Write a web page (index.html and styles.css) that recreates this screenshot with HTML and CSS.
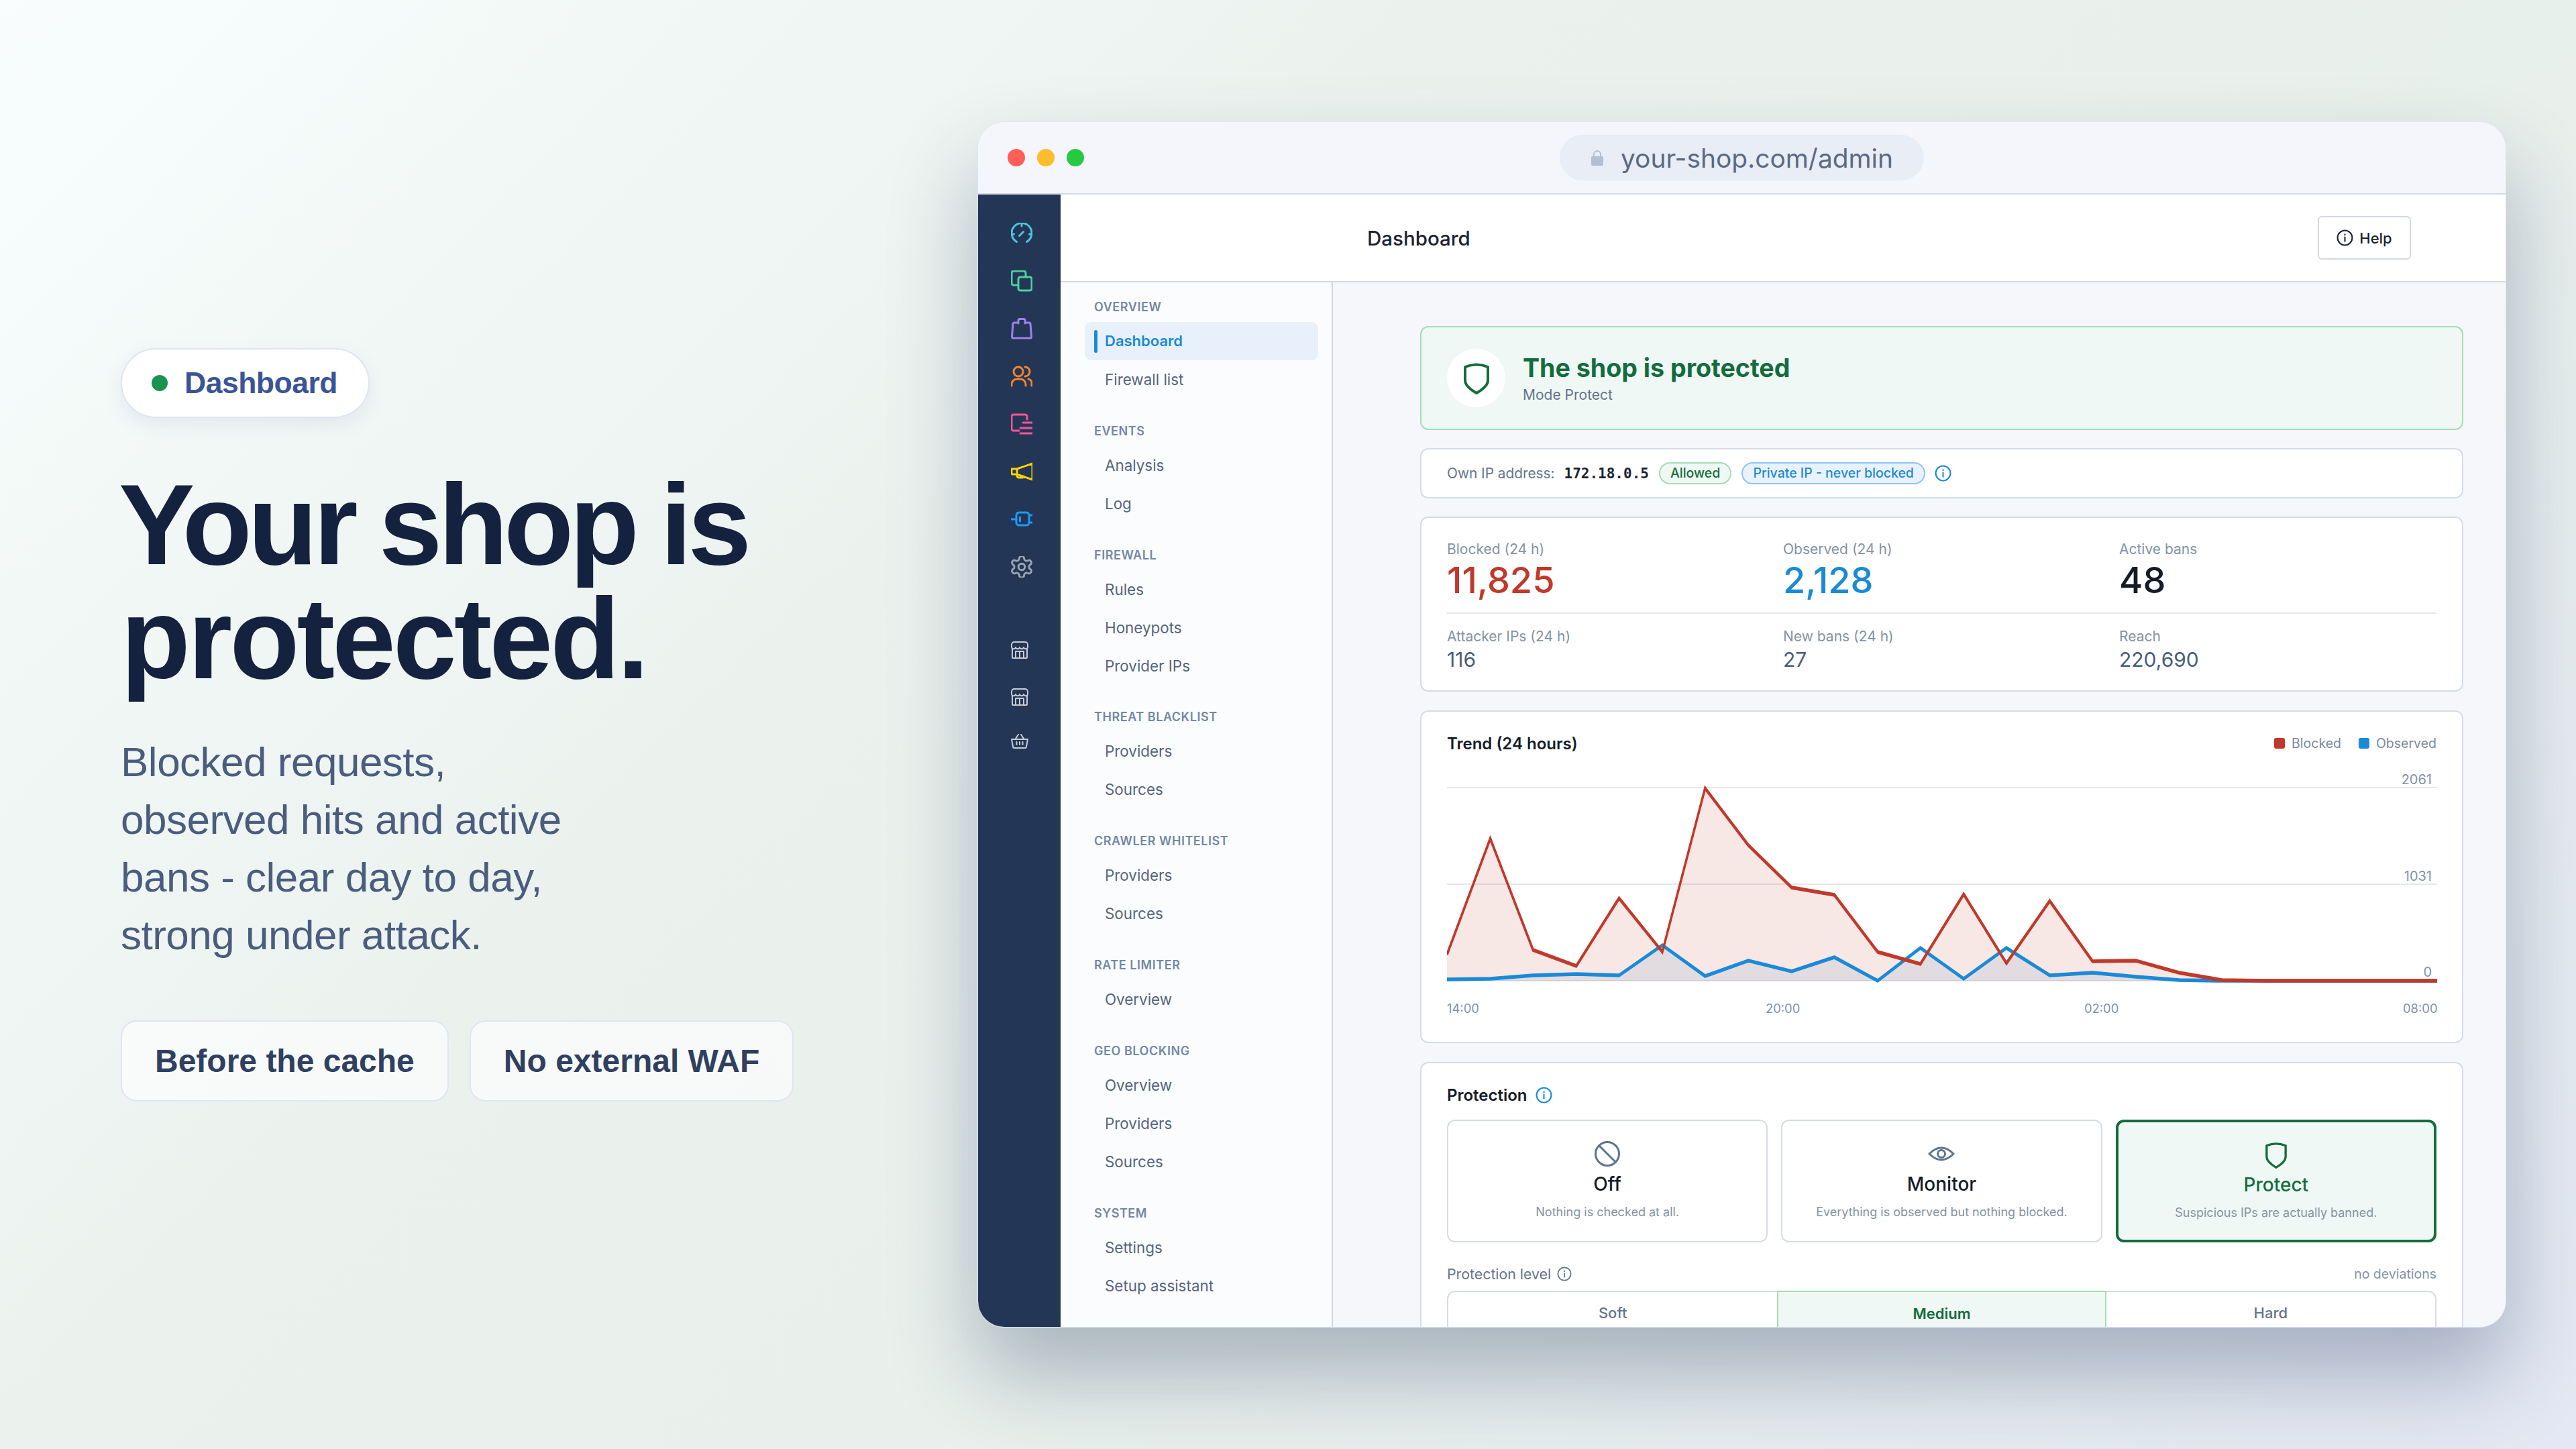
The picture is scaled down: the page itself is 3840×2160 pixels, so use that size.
FILE: index.html
```html
<!DOCTYPE html>
<html lang="en">
<head>
    <meta charset="UTF-8">
    <title>Dashboard</title>
    <link rel="stylesheet" href="styles.css">
</head>
<body>
    <section class="intro">
        <div class="pill"><span class="pill-dot"></span>Dashboard</div>
        <h1><span class="hero-top">Your shop is</span><span class="hero-bottom">protected.</span></h1>
        <p class="lead">Blocked requests,<br>observed hits and active<br>bans - clear day to day,<br>strong under attack.</p>
        <div class="chips">
            <div class="chip">Before the cache</div>
            <div class="chip">No external WAF</div>
        </div>
    </section>

    <div class="window">
        <div class="titlebar">
            <div class="lights"><span class="red"></span><span class="amber"></span><span class="green"></span></div>
            <div class="url">
                <svg class="lock" viewBox="0 0 20 24"><path d="M5 11V7a5 5 0 0 1 10 0v4" fill="none" stroke="#b4bed3" stroke-width="2"/><rect x="1" y="10" width="18" height="14" rx="2" fill="#b4bed3"/></svg>
                your-shop.com/admin
            </div>
        </div>
        <div class="app">
            <nav class="rail">
                <div class="rail-main">
                    <svg viewBox="0 0 32 32" style="color:#4fc3dc"><path d="M8.500 28.500A15 15 0 1 1 23.500 28.500M16 2v3M1.500 17h3M27.500 17h3M12.500 19.500l6-6"/></svg>
                    <svg viewBox="0 0 32 32" style="color:#4fd19a"><path d="M10 22H4a3 3 0 0 1-3-3V4a3 3 0 0 1 3-3h15a3 3 0 0 1 3 3v6"/><rect x="11" y="10" width="20" height="20" rx="3"/></svg>
                    <svg viewBox="0 0 32 32" style="color:#9b82f0"><path d="M10 7H5a2 2 0 0 0-2 2L1.500 28a2 2 0 0 0 2 2h25a2 2 0 0 0 2-2L29 9a2 2 0 0 0-2-2h-5"/><path d="M11 8V3.500a2 2 0 0 1 2-2h6a2 2 0 0 1 2 2V8"/></svg>
                    <svg viewBox="0 0 32 32" style="color:#f5832c"><circle cx="11" cy="9" r="7"/><path d="M1 30v-2a8 8 0 0 1 8-8h5a8 8 0 0 1 8 8v2M21 2a7 7 0 0 1 0 14M26 20a6 6 0 0 1 5 6v4"/></svg>
                    <svg viewBox="0 0 32 32" style="color:#f6549a"><path d="M24 9V5a3 3 0 0 0-3-3H4a3 3 0 0 0-3 3v18a3 3 0 0 0 3 3h8M18 14h14M14 22h18M14 30h18"/></svg>
                    <svg viewBox="0 0 32 32" style="color:#ffd400"><path d="M1 12h8v8H3a2 2 0 0 1-2-2zM9 12l23-8v24l-23-8M9 20v2a3 3 0 0 0 3 3h4a3 3 0 0 0 3-2"/></svg>
                    <svg viewBox="0 0 32 32" style="color:#1a9cf5"><rect x="8" y="6" width="19" height="19" rx="4"/><path d="M0 16h8M27 10h5M27 21h5M13.500 13v6"/></svg>
                    <svg viewBox="2 2 20 20" class="gear" style="color:#9aa5b5"><path d="M12.220 2h-.44a2 2 0 0 0-2 2v.18a2 2 0 0 1-1 1.730l-.43.25a2 2 0 0 1-2 0l-.15-.08a2 2 0 0 0-2.730.73l-.22.38a2 2 0 0 0 .73 2.730l.15.1a2 2 0 0 1 1 1.720v.51a2 2 0 0 1-1 1.740l-.15.09a2 2 0 0 0-.73 2.730l.22.38a2 2 0 0 0 2.730.73l.15-.08a2 2 0 0 1 2 0l.43.25a2 2 0 0 1 1 1.730V20a2 2 0 0 0 2 2h.44a2 2 0 0 0 2-2v-.18a2 2 0 0 1 1-1.730l.43-.25a2 2 0 0 1 2 0l.15.08a2 2 0 0 0 2.730-.73l.22-.39a2 2 0 0 0-.73-2.730l-.15-.08a2 2 0 0 1-1-1.740v-.5a2 2 0 0 1 1-1.740l.15-.09a2 2 0 0 0 .73-2.730l-.22-.38a2 2 0 0 0-2.730-.73l-.15.08a2 2 0 0 1-2 0l-.43-.25a2 2 0 0 1-1-1.730V4a2 2 0 0 0-2-2z"/><circle cx="12" cy="12" r="3"/></svg>
                </div>
                <div class="rail-shops">
                    <svg viewBox="0 0 26 26"><path d="M1 9V5a4 4 0 0 1 4-4h16a4 4 0 0 1 4 4v4M1 9c1 3 5 3 6 0 1 3 5 3 6 0 1 3 5 3 6 0 1 3 5 3 6 0M2 11v13a1 1 0 0 0 1 1h20a1 1 0 0 0 1-1V11M7 25V15h12v10M13 15v10"/></svg>
                    <svg viewBox="0 0 26 26"><path d="M1 9V5a4 4 0 0 1 4-4h16a4 4 0 0 1 4 4v4M1 9c1 3 5 3 6 0 1 3 5 3 6 0 1 3 5 3 6 0 1 3 5 3 6 0M2 11v13a1 1 0 0 0 1 1h20a1 1 0 0 0 1-1V11M7 25V15h12v10M13 15v10"/></svg>
                    <svg class="basket" viewBox="0 0 26 22"><path d="M1 8h24l-2 11a2 2 0 0 1-2 2H5a2 2 0 0 1-2-2zM7 7l4-6M19 7l-4-6M8.500 12v4M13 12v4M17.500 12v4"/></svg>
                </div>
            </nav>
            <div class="workspace">
                <header class="topbar">
                    <div class="topbar-title">Dashboard</div>
                    <div class="help-btn">
                        <svg class="info" viewBox="0 0 24 24"><circle cx="12" cy="12" r="10.500"/><path d="M12 11v6M12 7v1"/></svg>
                        Help
                    </div>
                </header>
                <div class="panes">
                    <aside class="subnav">
                        <div class="nav-group">
                            <div class="nav-title">OVERVIEW</div>
                            <div class="nav-item active">Dashboard</div>
                            <div class="nav-item">Firewall list</div>
                        </div>
                        <div class="nav-group">
                            <div class="nav-title">EVENTS</div>
                            <div class="nav-item">Analysis</div>
                            <div class="nav-item">Log</div>
                        </div>
                        <div class="nav-group">
                            <div class="nav-title">FIREWALL</div>
                            <div class="nav-item">Rules</div>
                            <div class="nav-item">Honeypots</div>
                            <div class="nav-item">Provider IPs</div>
                        </div>
                        <div class="nav-group">
                            <div class="nav-title">THREAT BLACKLIST</div>
                            <div class="nav-item">Providers</div>
                            <div class="nav-item">Sources</div>
                        </div>
                        <div class="nav-group">
                            <div class="nav-title">CRAWLER WHITELIST</div>
                            <div class="nav-item">Providers</div>
                            <div class="nav-item">Sources</div>
                        </div>
                        <div class="nav-group">
                            <div class="nav-title">RATE LIMITER</div>
                            <div class="nav-item">Overview</div>
                        </div>
                        <div class="nav-group">
                            <div class="nav-title">GEO BLOCKING</div>
                            <div class="nav-item">Overview</div>
                            <div class="nav-item">Providers</div>
                            <div class="nav-item">Sources</div>
                        </div>
                        <div class="nav-group">
                            <div class="nav-title">SYSTEM</div>
                            <div class="nav-item">Settings</div>
                            <div class="nav-item">Setup assistant</div>
                        </div>
                    </aside>
                    <main class="content">
                        <div class="banner">
                            <div class="banner-icon">
                                <svg class="shield" viewBox="0 0 40 48"><path d="M3 7Q20 0 37 7V27Q37 36 20 46 3 36 3 27Z"/></svg>
                            </div>
                            <div>
                                <div class="banner-title">The shop is protected</div>
                                <div class="banner-sub">Mode Protect</div>
                            </div>
                        </div>

                        <div class="card ip-row">
                            <span class="ip-label">Own IP address:</span>
                            <span class="ip-value">172.18.0.5</span>
                            <span class="badge badge-green">Allowed</span>
                            <span class="badge badge-blue">Private IP - never blocked</span>
                            <svg class="info info-blue" viewBox="0 0 24 24"><circle cx="12" cy="12" r="10.500"/><path d="M12 11v6M12 7v1"/></svg>
                        </div>

                        <div class="card stats">
                            <div class="stats-row">
                                <div><div class="stat-label">Blocked (24 h)</div><div class="stat-big red-text">11,825</div></div>
                                <div><div class="stat-label">Observed (24 h)</div><div class="stat-big blue-text">2,128</div></div>
                                <div><div class="stat-label">Active bans</div><div class="stat-big">48</div></div>
                            </div>
                            <div class="stats-row second">
                                <div><div class="stat-label">Attacker IPs (24 h)</div><div class="stat-small">116</div></div>
                                <div><div class="stat-label">New bans (24 h)</div><div class="stat-small">27</div></div>
                                <div><div class="stat-label">Reach</div><div class="stat-small">220,690</div></div>
                            </div>
                        </div>

                        <div class="card trend">
                            <div class="trend-head">
                                <div class="card-title">Trend (24 hours)</div>
                                <div class="legend">
                                    <span class="legend-item"><i class="sw-red"></i>Blocked</span>
                                    <span class="legend-item"><i class="sw-blue"></i>Observed</span>
                                </div>
                            </div>
                            <div class="chart">
                                <svg class="chart-grid" viewBox="0 0 1476 340">
                                    <line class="grid" x1="0" y1="34" x2="1476" y2="34"/>
                                    <line class="grid" x1="0" y1="178" x2="1476" y2="178"/>
                                    <line class="grid" x1="0" y1="322" x2="1476" y2="322"/>
                                    <text class="axis" x="1468" y="29" text-anchor="end">2061</text>
                                    <text class="axis" x="1468" y="173" text-anchor="end">1031</text>
                                    <text class="axis" x="1468" y="316" text-anchor="end">0</text>
                                </svg>
                                <svg class="chart-lines" viewBox="0 0 1968 272" preserveAspectRatio="none">
                                    <polygon class="area-blue" points="0,257.6 0,256 86,255.2 171,251.2 257,249.6 342,251.2 428,215.2 513,252 599,233.6 685,246.4 770,229.6 856,257.6 941,218.4 1027,255.2 1112,218.4 1198,251.2 1283,248 1369,252.8 1455,256.8 1540,257.6 1968,257.6"/>
                                    <polygon class="area-red" points="0,257.6 0,226.4 86,88 171,220.8 257,240 342,159.2 428,223.2 513,28 599,96 685,146.4 770,155.2 856,223.2 941,237.6 1027,154.4 1112,236.8 1198,162.4 1283,234.4 1369,233.6 1455,248 1540,256.8 1626,257.6 1968,257.6"/>
                                    <polyline class="line-blue" points="0,256 86,255.2 171,251.2 257,249.6 342,251.2 428,215.2 513,252 599,233.6 685,246.4 770,229.6 856,257.6 941,218.4 1027,255.2 1112,218.4 1198,251.2 1283,248 1369,252.8 1455,256.8 1540,257.6 1968,257.6"/>
                                    <polyline class="line-red" points="0,226.4 86,88 171,220.8 257,240 342,159.2 428,223.2 513,28 599,96 685,146.4 770,155.2 856,223.2 941,237.6 1027,154.4 1112,236.8 1198,162.4 1283,234.4 1369,233.6 1455,248 1540,256.8 1626,257.6 1968,257.6"/>
                                </svg>
                            </div>
                            <div class="x-axis"><span>14:00</span><span>20:00</span><span>02:00</span><span>08:00</span></div>
                        </div>

                        <div class="card protection">
                            <div class="card-title with-icon">Protection
                                <svg class="info info-blue" viewBox="0 0 24 24"><circle cx="12" cy="12" r="10.500"/><path d="M12 11v6M12 7v1"/></svg>
                            </div>
                            <div class="modes">
                                <div class="mode">
                                    <svg class="mode-icon" viewBox="0 0 40 40"><circle cx="20" cy="20" r="17.500"/><path d="M8 8l24 24"/></svg>
                                    <div class="mode-name">Off</div>
                                    <div class="mode-desc">Nothing is checked at all.</div>
                                </div>
                                <div class="mode">
                                    <svg class="mode-icon" viewBox="0 0 40 40"><path d="M2 20Q20 2 38 20 20 38 2 20Z"/><circle cx="20" cy="20" r="5.500"/></svg>
                                    <div class="mode-name">Monitor</div>
                                    <div class="mode-desc">Everything is observed but nothing blocked.</div>
                                </div>
                                <div class="mode selected">
                                    <svg class="shield" viewBox="0 0 40 48"><path d="M3 7Q20 0 37 7V27Q37 36 20 46 3 36 3 27Z"/></svg>
                                    <div class="mode-name">Protect</div>
                                    <div class="mode-desc">Suspicious IPs are actually banned.</div>
                                </div>
                            </div>
                            <div class="level-head">
                                <div class="level-label">Protection level
                                    <svg class="info info-grey" viewBox="0 0 24 24"><circle cx="12" cy="12" r="10.500"/><path d="M12 11v6M12 7v1"/></svg>
                                </div>
                                <div class="level-note">no deviations</div>
                            </div>
                            <div class="levels">
                                <div class="level">Soft</div>
                                <div class="level on">Medium</div>
                                <div class="level">Hard</div>
                            </div>
                        </div>
                    </main>
                </div>
            </div>
        </div>
    </div>
</body>
</html>
```

FILE: styles.css
```css
* {
    box-sizing: border-box;
}

body {
    margin: 0;
    width: 3840px;
    height: 2160px;
    padding: 0 104px 0 180px;
    display: flex;
    justify-content: space-between;
    align-items: center;
    overflow: hidden;
    font-family: "Liberation Sans", Arial, sans-serif;
    background: linear-gradient(135deg, #f9fdfe 0%, #ebf2ee 36%, #e8f0eb 64%, #e3e8f4 100%);
}

/* left column */
.intro {
    width: 1100px;
}

.pill {
    display: inline-flex;
    align-items: center;
    gap: 25px;
    height: 104px;
    padding: 0 46px 0 44px;
    background: #fff;
    border: 2px solid #dfe5f3;
    border-radius: 52px;
    box-shadow: 0 10px 30px rgba(30, 50, 90, 0.08);
    color: #3a5498;
    font-size: 44.500px;
    font-weight: 700;
    letter-spacing: -0.5px;
}

.pill-dot {
    width: 24px;
    height: 24px;
    border-radius: 50%;
    background: #1a934e;
}

h1 {
    margin: 74px 0 0;
    font-size: 170px;
    line-height: 170px;
    font-weight: 700;
    color: #14223f;
}

.hero-top,
.hero-bottom {
    display: block;
}

.hero-top {
    margin-left: -3px;
    letter-spacing: -6px;
    word-spacing: -4px;
}

.hero-bottom {
    letter-spacing: -3.8px;
}

.lead {
    margin: 56px 0 0;
    font-size: 62px;
    line-height: 86px;
    letter-spacing: -0.5px;
    color: #4a5d7e;
}

.chips {
    display: flex;
    gap: 31px;
    margin-top: 84px;
}

.chip {
    height: 121px;
    padding: 0 49px;
    display: flex;
    align-items: center;
    background: rgba(255, 255, 255, 0.6);
    border: 2px solid #dfe5f3;
    border-radius: 24px;
    color: #2f4060;
    font-size: 48px;
    font-weight: 700;
}

/* browser window */
.window {
    flex-shrink: 0;
    width: 2279px;
    height: 1798px;
    display: flex;
    flex-direction: column;
    overflow: hidden;
    background: #f4f6fb;
    border: 1px solid #dfe5f3;
    border-radius: 40px;
    box-shadow: 0 70px 130px rgba(30, 50, 90, 0.32);
    font-family: Inter, "Liberation Sans", sans-serif;
}

.titlebar {
    flex-shrink: 0;
    height: 108px;
    position: relative;
    display: flex;
    align-items: center;
    justify-content: center;
    background: #f4f6fb;
    border-bottom: 2px solid #d5dae5;
}

.lights {
    position: absolute;
    left: 44px;
    top: 40px;
    display: flex;
    gap: 18px;
}

.lights span {
    width: 26px;
    height: 26px;
    border-radius: 50%;
}

.red { background: #ff5f57; }
.amber { background: #febc2e; }
.green { background: #28c840; }

.url {
    width: 543px;
    height: 68px;
    display: flex;
    align-items: center;
    justify-content: center;
    gap: 25px;
    background: #e9edf5;
    border-radius: 34px;
    color: #5a6a85;
    font-size: 38.900px;
}

.lock {
    width: 20px;
    height: 24px;
}

.app {
    flex: 1;
    min-height: 0;
    display: flex;
}

/* dark icon rail */
.rail {
    flex-shrink: 0;
    width: 123px;
    padding: 42px 0 0 49px;
    background: #243656;
}

.rail svg {
    display: block;
    fill: none;
    stroke-width: 3;
    stroke-linecap: round;
    stroke-linejoin: round;
    stroke: currentColor;
}

.rail-main {
    display: flex;
    flex-direction: column;
    gap: 39px;
}

.rail-main svg {
    width: 32px;
    height: 32px;
}

.rail-main .gear {
    stroke-width: 1.800;
}

.rail-shops {
    margin-top: 95px;
    display: flex;
    flex-direction: column;
    gap: 44px;
    color: #c8ccd6;
}

.rail-shops svg {
    width: 26px;
    height: 26px;
    stroke-width: 2;
}

.rail-shops .basket {
    height: 22px;
    margin-top: -2px;
}

.workspace {
    flex: 1;
    min-width: 0;
    display: flex;
    flex-direction: column;
}

.topbar {
    flex-shrink: 0;
    height: 131px;
    padding: 0 141px 0 457px;
    display: flex;
    align-items: center;
    justify-content: space-between;
    background: #fff;
    border-bottom: 2px solid #d5dae2;
}

.topbar-title {
    font-size: 29.500px;
    font-weight: 500;
    color: #1c2330;
}

.help-btn {
    width: 139px;
    height: 65px;
    display: flex;
    align-items: center;
    justify-content: center;
    gap: 9px;
    border: 2px solid #d5d9e0;
    border-radius: 6px;
    color: #1c2330;
    font-size: 22px;
    font-weight: 500;
}

.info {
    width: 25px;
    height: 25px;
    fill: none;
    stroke: currentColor;
    stroke-width: 2;
    stroke-linecap: round;
    flex-shrink: 0;
}

.info-blue { color: #1b8ad6; }
.info-grey { color: #64748b; width: 22px; height: 22px; }

.panes {
    flex: 1;
    min-height: 0;
    display: flex;
}

/* section nav */
.subnav {
    flex-shrink: 0;
    width: 406px;
    padding: 25px 20px 0 36px;
    background: #fbfcfe;
    border-right: 2px solid #cfd6e0;
}

.nav-group {
    margin-bottom: 36.800px;
}

.nav-title {
    height: 24px;
    line-height: 24px;
    margin-bottom: 10px;
    padding-left: 14px;
    color: #7288a5;
    font-size: 18px;
    font-weight: 600;
    letter-spacing: 0.550px;
}

.nav-item {
    position: relative;
    height: 57px;
    line-height: 57px;
    padding-left: 30px;
    border-radius: 10px;
    color: #55657d;
    font-size: 22.400px;
}

.nav-item.active {
    background: #e8f0fb;
    color: #1b8ad6;
    font-size: 22px;
    font-weight: 600;
}

.nav-item.active::before {
    content: "";
    position: absolute;
    left: 14px;
    top: 12px;
    width: 5px;
    height: 34px;
    border-radius: 3px;
    background: #1b8ad6;
}

/* main column */
.content {
    flex: 1;
    min-width: 0;
    height: 100%;
    padding: 65px 63px 0 130px;
    display: flex;
    flex-direction: column;
    gap: 27px;
    overflow: hidden;
    background: #f5f7fb;
}

.card {
    flex-shrink: 0;
    padding: 0 38px;
    background: #fff;
    border: 2px solid #d5dce5;
    border-radius: 12px;
}

.banner {
    flex-shrink: 0;
    height: 155px;
    padding: 0 38px;
    display: flex;
    align-items: center;
    gap: 26px;
    background: #eff8f4;
    border: 2px solid #a5dcb6;
    border-radius: 12px;
}

.banner-icon {
    width: 87px;
    height: 87px;
    display: flex;
    align-items: center;
    justify-content: center;
    border-radius: 50%;
    background: #fff;
}

.shield {
    display: block;
    width: 40px;
    height: 48px;
    fill: none;
    stroke: #146c3e;
    stroke-width: 4;
    stroke-linejoin: round;
}

.banner-title {
    color: #146c3e;
    font-size: 37.600px;
    font-weight: 700;
    line-height: 48px;
}

.banner-sub {
    margin-top: 2px;
    color: #64748b;
    font-size: 21px;
    line-height: 28px;
}

.ip-row {
    height: 75px;
    display: flex;
    align-items: center;
    color: #64748b;
    font-size: 20.800px;
}

.ip-value {
    margin: 0 15px 0 14px;
    color: #1c2330;
    font-family: "DejaVu Sans Mono", monospace;
    font-size: 21px;
    font-weight: 700;
}

.badge {
    height: 33px;
    line-height: 29px;
    padding: 0 15px;
    border-radius: 17px;
    font-size: 19.500px;
    font-weight: 500;
}

.badge-green {
    margin-right: 15px;
    background: #eff8f4;
    border: 2px solid #a5dcb6;
    color: #146c3e;
}

.badge-blue {
    margin-right: 14px;
    background: #e8f2fc;
    border: 2px solid #8fc4f0;
    color: #1b8ad6;
}

.stats {
    height: 261px;
    padding-top: 34px;
}

.stats-row {
    display: grid;
    grid-template-columns: 501px 501px 1fr;
    height: 107px;
}

.stats-row.second {
    border-top: 2px solid #e4e8ed;
    padding-top: 21px;
}

.stat-label {
    color: #8492a8;
    font-size: 21px;
    line-height: 26px;
}

.stat-big {
    color: #151c27;
    font-size: 54px;
    font-weight: 500;
    line-height: 66px;
}

.red-text { color: #c0392b; }
.blue-text { color: #1b8ad6; }

.stat-small {
    margin-top: 2px;
    color: #4a5d78;
    font-size: 30px;
    line-height: 38px;
}

.trend {
    height: 496px;
    margin-top: 1px;
    padding-top: 30px;
}

.trend-head {
    display: flex;
    justify-content: space-between;
    align-items: center;
    height: 34px;
}

.card-title {
    color: #151c27;
    font-size: 24px;
    font-weight: 600;
}

.legend {
    display: flex;
    gap: 26px;
    color: #7a8aa0;
    font-size: 19.500px;
}

.legend-item {
    display: flex;
    align-items: center;
    gap: 10px;
}

.legend-item i {
    width: 16px;
    height: 16px;
    border-radius: 3px;
}

.sw-red { background: #c0392b; }
.sw-blue { background: #1b8ad6; }

.chart {
    position: relative;
    width: 1476px;
    height: 340px;
    margin-top: 15px;
}

.chart-grid {
    display: block;
    width: 100%;
    height: 100%;
}

.chart-lines {
    position: absolute;
    left: 0;
    top: 0;
    width: 100%;
    height: 100%;
}

.grid {
    stroke: #e4e8ed;
    stroke-width: 2;
}

.axis {
    fill: #8092ab;
    font-size: 20px;
}

.area-red { fill: rgba(192, 57, 43, 0.12); }
.area-blue { fill: rgba(27, 138, 214, 0.1); }

.line-red,
.line-blue {
    fill: none;
    stroke-width: 4.500;
    stroke-linejoin: miter;
    stroke-miterlimit: 10;
}

.line-red { stroke: #c0392b; }
.line-blue { stroke: #1b8ad6; }

.x-axis {
    display: flex;
    justify-content: space-between;
    margin-top: 12px;
    color: #8092ab;
    font-size: 18.400px;
}

.x-axis span {
    width: 50px;
}

.x-axis span:last-child {
    text-align: right;
}

.protection {
    margin-top: 1px;
    padding-top: 32px;
    flex: 1 0 auto;
    border-bottom: none;
}

.with-icon {
    display: flex;
    align-items: center;
    gap: 12px;
    height: 30px;
}

.modes {
    display: grid;
    grid-template-columns: repeat(3, 1fr);
    gap: 20px;
    margin-top: 22px;
}

.mode {
    height: 183px;
    display: flex;
    flex-direction: column;
    align-items: center;
    padding-top: 29px;
    border: 2px solid #d5dce5;
    border-radius: 12px;
}

.mode.selected {
    padding-top: 29px;
    background: #eff8f4;
    border: 4px solid #146c3e;
}

.mode-icon {
    display: block;
    width: 40px;
    height: 40px;
    fill: none;
    stroke: #5f7490;
    stroke-width: 3;
}

.mode .shield {
    width: 34px;
    height: 40px;
}

.mode-name {
    margin-top: 8px;
    color: #151c27;
    font-size: 28px;
    font-weight: 500;
    line-height: 34px;
}

.selected .mode-name {
    margin-top: 7px;
    color: #146c3e;
}

.mode-desc {
    margin-top: 12px;
    color: #8492a8;
    font-size: 18px;
    line-height: 26px;
}

.level-head {
    display: flex;
    justify-content: space-between;
    align-items: center;
    height: 30px;
    margin-top: 32px;
    color: #64748b;
    font-size: 21.300px;
}

.level-label {
    display: flex;
    align-items: center;
    gap: 9px;
}

.level-note {
    color: #8492a8;
    font-size: 19.500px;
}

.levels {
    display: grid;
    grid-template-columns: 1fr 1fr 1fr;
    height: 80px;
    margin-top: 10px;
    border: 2px solid #d5dce5;
    border-radius: 12px 12px 0 0;
}

.level {
    padding-top: 17px;
    text-align: center;
    color: #64748b;
    font-size: 22px;
    font-weight: 500;
    line-height: 28px;
}

.level.on {
    margin-top: -2px;
    padding-top: 18px;
    background: #eff8f4;
    border: 2px solid #a5dcb6;
    color: #146c3e;
    font-weight: 600;
}
```
